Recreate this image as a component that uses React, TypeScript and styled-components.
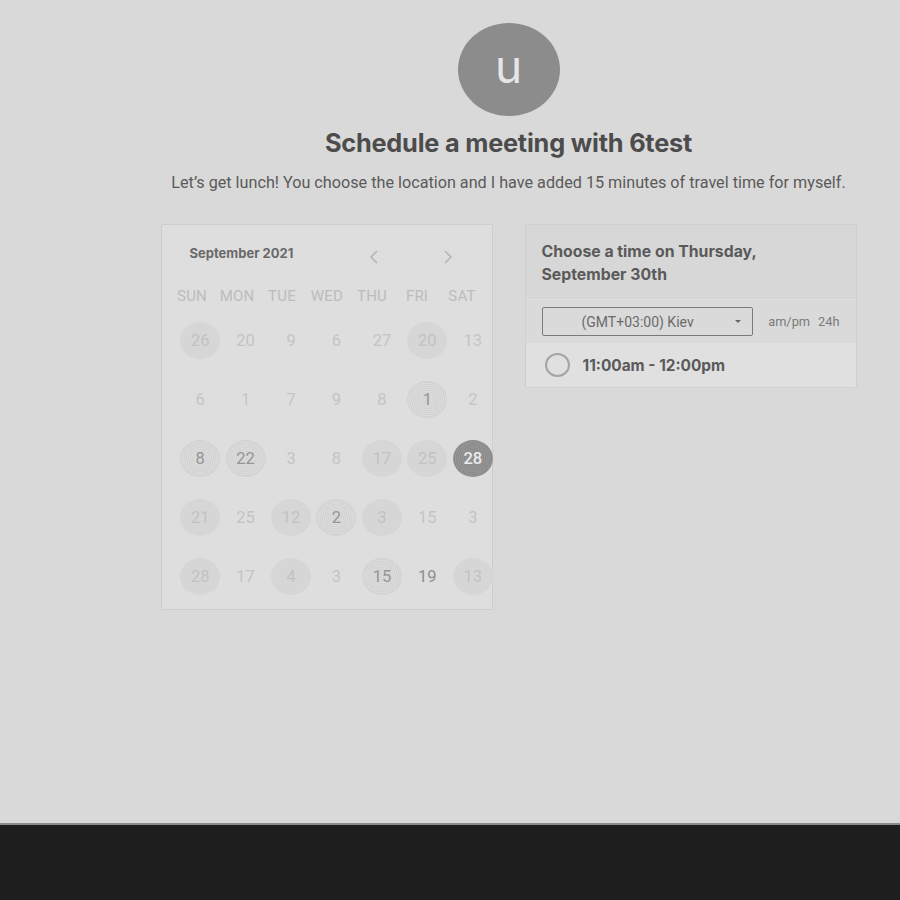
import React from "react";
import styled, { createGlobalStyle, css } from "styled-components";

const Global = createGlobalStyle`
  html, body { margin: 0; padding: 0; background: #d9d9d9; }
  body { font-family: Roboto, "Liberation Sans", sans-serif; }
  * { box-sizing: border-box; }
`;

const Page = styled.div`
  width: 900px;
  height: 900px;
  display: flex;
  flex-direction: column;
  background: #d9d9d9;
  overflow: hidden;
`;

const Main = styled.main`
  flex: 1;
  display: flex;
  flex-direction: column;
  align-items: center;
  padding: 23px 0 0 117px;
`;

const Avatar = styled.div`
  width: 102px;
  height: 93px;
  border-radius: 50%;
  background: #8c8c8c;
  color: #e6e6e6;
  display: flex;
  align-items: center;
  justify-content: center;
  font-family: Inter, sans-serif;
  font-size: 46px;
  line-height: 1;
  padding-bottom: 8px;
`;

const Title = styled.h1`
  margin: 12px 0 0;
  font-family: Inter, sans-serif;
  font-weight: 700;
  font-size: 25.3px;
  line-height: 30px;
  color: #4c4c4c;
  letter-spacing: -0.2px;
`;

const Subtitle = styled.p`
  margin: 15px 0 0;
  font-family: Roboto, sans-serif;
  font-size: 16.2px;
  line-height: 20px;
  color: #5a5a5a;
`;

const Panels = styled.div`
  margin-top: 31px;
  display: flex;
  gap: 32px;
  align-items: flex-start;
`;

const CalendarCard = styled.section`
  width: 332px;
  height: 386px;
  background: #dedede;
  border: 1px solid #cdcdcd;
  border-radius: 2px;
  padding: 0 0 0 15px;
  display: flex;
  flex-direction: column;
  & > * { flex-shrink: 0; }
`;

const CalHeader = styled.div`
  height: 57px;
  display: flex;
  align-items: flex-start;
  padding: 20px 0 0 13px;
`;

const Month = styled.div`
  font-family: Inter, sans-serif;
  font-weight: 700;
  font-size: 13px;
  line-height: 16px;
  color: #6a6a6a;
  width: 170px;
`;

const NavButton = styled.span<{ $gap: number }>`
  width: 20px;
  display: flex;
  justify-content: center;
  margin-left: ${(p) => p.$gap}px;
  margin-top: 5px;
`;

const WeekGrid = styled.div`
  width: 315px;
  margin-left: -7px;
  display: grid;
  grid-template-columns: repeat(7, 1fr);
`;

const WeekDay = styled.div`
  height: 28px;
  display: flex;
  align-items: center;
  justify-content: center;
  font-family: Roboto, sans-serif;
  font-size: 15px;
  color: #bcbcbc;
  letter-spacing: 0.2px;
`;

const DayGrid = styled.div`
  width: 318px;
  margin-left: 1px;
  margin-top: 12px;
  display: grid;
  grid-template-columns: repeat(7, 1fr);
  grid-auto-rows: 37px;
  row-gap: 22px;
`;

const DayCell = styled.div`
  display: flex;
  align-items: flex-start;
  justify-content: center;
`;

type Kind = "plain" | "soft" | "ring" | "selected" | "dark";

const DayCircle = styled.div<{ $kind: Kind }>`
  width: 40px;
  height: 37px;
  flex-shrink: 0;
  border-radius: 50%;
  display: flex;
  align-items: center;
  justify-content: center;
  font-family: Roboto, sans-serif;
  font-size: 16.5px;
  color: #c4c4c4;
  ${(p) =>
    p.$kind === "soft" &&
    css`
      background: #d6d6d6;
      color: #c2c2c2;
    `}
  ${(p) =>
    p.$kind === "ring" &&
    css`
      background: repeating-radial-gradient(circle, #dbdbdb 0 1px, #d3d3d3 1px 2px);
      border: 1px solid #d2d2d2;
      color: #959595;
    `}
  ${(p) =>
    p.$kind === "selected" &&
    css`
      background: repeating-radial-gradient(circle, #8b8b8b 0 1px, #959595 1px 2px);
      color: #ececec;
      font-weight: 500;
    `}
  ${(p) =>
    p.$kind === "dark" &&
    css`
      color: #8e8e8e;
    `}
`;

const TimeCard = styled.section`
  width: 332px;
  border: 1px solid #cfcfcf;
  border-radius: 2px;
  background: #dcdcdc;
  display: flex;
  flex-direction: column;
`;

const TimeHeader = styled.div`
  height: 75px;
  padding: 15px 16px 0;
  background: #d7d7d7;
  border-bottom: 1px solid #e0e0e0;
  font-family: Inter, sans-serif;
  font-weight: 700;
  font-size: 15.8px;
  line-height: 23px;
  color: #5a5a5a;
`;

const TzRow = styled.div`
  height: 43px;
  display: flex;
  align-items: center;
  padding: 0 16px;
  gap: 15px;
  background: #dadada;
`;

const TzSelect = styled.div`
  width: 212px;
  height: 29px;
  border: 1px solid #7a7a7a;
  border-radius: 2px;
  display: flex;
  align-items: center;
  padding: 0 11px 0 39px;
  font-family: Roboto, sans-serif;
  font-size: 14px;
  color: #6a6a6a;
`;

const TzText = styled.span`
  flex: 1;
`;

const Caret = styled.span`
  width: 0;
  height: 0;
  border-left: 3.5px solid transparent;
  border-right: 3.5px solid transparent;
  border-top: 3.5px solid #666;
`;

const FormatToggle = styled.div`
  display: flex;
  gap: 8px;
  font-family: Roboto, sans-serif;
  font-size: 12.8px;
  color: #7a7a7a;
`;

const SlotRow = styled.div`
  height: 44px;
  display: flex;
  align-items: center;
  padding: 0 0 0 19px;
  gap: 13px;
  background: #e0e0e0;
`;

const Radio = styled.span`
  width: 25px;
  height: 24px;
  border-radius: 50%;
  border: 2px solid #a4a4a4;
`;

const SlotText = styled.span`
  font-family: Inter, sans-serif;
  font-weight: 700;
  font-size: 15.4px;
  color: #5a5a5a;
`;

const Footer = styled.footer`
  height: 77px;
  background: #1e1e1e;
  border-top: 2px solid #8a8a8a;
`;

const Chevron = ({ dir }: { dir: "left" | "right" }) => (
  <svg width="10" height="14" viewBox="0 0 10 14">
    <path
      d={dir === "left" ? "M8 1 L2 7 L8 13" : "M2 1 L8 7 L2 13"}
      fill="none"
      stroke="#b5b5b5"
      strokeWidth="1.6"
    />
  </svg>
);

const days: [string, Kind][] = [
  ["26", "soft"], ["20", "plain"], ["9", "plain"], ["6", "plain"], ["27", "plain"], ["20", "soft"], ["13", "plain"],
  ["6", "plain"], ["1", "plain"], ["7", "plain"], ["9", "plain"], ["8", "plain"], ["1", "ring"], ["2", "plain"],
  ["8", "ring"], ["22", "ring"], ["3", "plain"], ["8", "plain"], ["17", "soft"], ["25", "soft"], ["28", "selected"],
  ["21", "soft"], ["25", "plain"], ["12", "soft"], ["2", "ring"], ["3", "soft"], ["15", "plain"], ["3", "plain"],
  ["28", "soft"], ["17", "plain"], ["4", "soft"], ["3", "plain"], ["15", "ring"], ["19", "dark"], ["13", "soft"],
];

const weekDays = ["SUN", "MON", "TUE", "WED", "THU", "FRI", "SAT"];

export default function App() {
  return (
    <Page>
      <Global />
      <Main>
        <Avatar>u</Avatar>
        <Title>Schedule a meeting with 6test</Title>
        <Subtitle>
          Let’s get lunch! You choose the location and I have added 15 minutes of travel time for myself.
        </Subtitle>
        <Panels>
          <CalendarCard>
            <CalHeader>
              <Month>September 2021</Month>
              <NavButton $gap={4}>
                <Chevron dir="left" />
              </NavButton>
              <NavButton $gap={54}>
                <Chevron dir="right" />
              </NavButton>
            </CalHeader>
            <WeekGrid>
              {weekDays.map((d) => (
                <WeekDay key={d}>{d}</WeekDay>
              ))}
            </WeekGrid>
            <DayGrid>
              {days.map(([n, k], i) => (
                <DayCell key={i}>
                  <DayCircle $kind={k}>{n}</DayCircle>
                </DayCell>
              ))}
            </DayGrid>
          </CalendarCard>
          <TimeCard>
            <TimeHeader>
              Choose a time on Thursday,
              <br />
              September 30th
            </TimeHeader>
            <TzRow>
              <TzSelect>
                <TzText>(GMT+03:00) Kiev</TzText>
                <Caret />
              </TzSelect>
              <FormatToggle>
                <span>am/pm</span>
                <span>24h</span>
              </FormatToggle>
            </TzRow>
            <SlotRow>
              <Radio />
              <SlotText>11:00am - 12:00pm</SlotText>
            </SlotRow>
          </TimeCard>
        </Panels>
      </Main>
      <Footer />
    </Page>
  );
}
